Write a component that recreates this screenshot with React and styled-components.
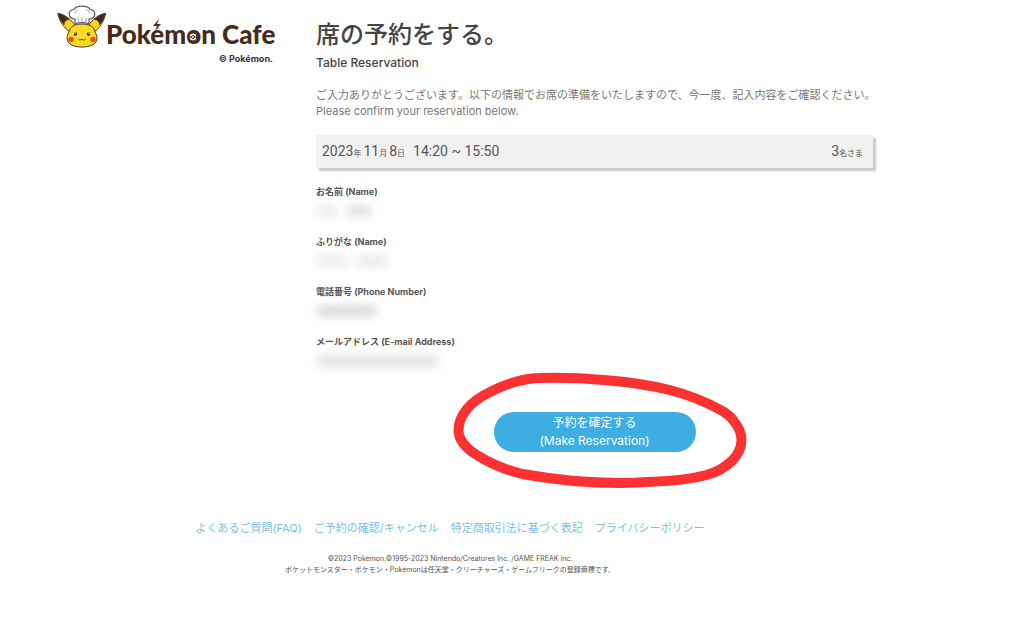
import React from "react";
import styled, { createGlobalStyle } from "styled-components";

const GlobalStyle = createGlobalStyle`
  * { box-sizing: border-box; }
  body {
    margin: 0;
    background: #fff;
    color: #555;
    font-family: Inter, "Noto Sans CJK JP", sans-serif;
  }
  h1, h2, p, dl, dt, dd, ul { margin: 0; padding: 0; }
`;

const Page = styled.div`
  padding: 0 151px 64px 27px;
`;

const Columns = styled.div`
  display: flex;
  gap: 43px;
`;

const Brand = styled.header`
  flex: none;
  width: 246px;
  padding: 5px 0 0 30px;
  display: flex;
  flex-direction: column;
`;

const LogoLink = styled.a`
  display: flex;
  align-items: flex-start;
  color: #452a1d;
  text-decoration: none;
`;

const Mascot = styled.svg`
  flex: none;
  width: 49px;
  height: 44px;
`;

const Wordmark = styled.span`
  position: relative;
  padding-top: 13px;
  font: 900 26px/32px Lato, sans-serif;
  white-space: nowrap;
`;

const WordmarkDetails = styled.svg`
  position: absolute;
  left: 0;
  top: 0;
  width: 100%;
  height: 44px;
`;

const Rights = styled.small`
  align-self: flex-end;
  margin-top: 3px;
  font-size: 9px;
  line-height: 12px;
  font-weight: 700;
  color: #333;
`;

const Main = styled.main`
  flex: 1;
  min-width: 0;
  padding-top: 17px;
`;

const Title = styled.h1`
  font-size: 24px;
  line-height: 36px;
  font-weight: 500;
  color: #444;
`;

const Subtitle = styled.h2`
  margin-top: 2px;
  font-size: 12px;
  line-height: 16px;
  font-weight: 500;
  color: #444;
`;

const Intro = styled.p`
  margin-top: 16px;
  font-size: 11px;
  line-height: 16px;
  color: #777;
  white-space: nowrap;
`;

const Summary = styled.section`
  display: flex;
  justify-content: space-between;
  margin-top: 16px;
  padding: 7px 10px 8px 6px;
  font-family: Roboto, "Noto Sans CJK JP", sans-serif;
  line-height: 18px;
  font-size: 14px;
  font-weight: 400;
  color: #555;
  background: #f1f1f1;
  box-shadow: 3px 3px 2px #c8c8c8;
`;

const Unit = styled.small`
  font-size: 8px;
  line-height: 8px;
  font-weight: 400;
  margin-right: ${(p) => p.$gap || 0}px;
`;

const Details = styled.dl`
  padding-top: 17px;
`;

const Field = styled.div`
  height: 50px;
`;

const Label = styled.dt`
  font-size: 9px;
  line-height: 14px;
  font-weight: 700;
  color: #555;
`;

const Value = styled.dd`
  display: flex;
  gap: 8px;
  padding-top: 6px;
`;

const Masked = styled.span`
  width: ${(p) => p.$width}px;
  height: 12px;
  background: ${(p) => p.$tone};
  border-radius: 6px;
  filter: blur(4px);
`;

const Submit = styled.div`
  position: relative;
  display: flex;
  justify-content: center;
  padding-top: 27px;
`;

const SubmitButton = styled.button`
  width: 202px;
  padding: 2px 0;
  border: 0;
  border-radius: 20px;
  background: #3dade2;
  color: #fff;
  font-family: inherit;
  font-size: 12px;
  line-height: 18px;
  cursor: pointer;
`;

const Marker = styled.svg`
  position: absolute;
  left: 50%;
  top: -15px;
  width: 300px;
  height: 124px;
  margin-left: -145px;
  pointer-events: none;
`;

const Footer = styled.footer`
  padding-top: 68px;
  text-align: center;
`;

const Links = styled.ul`
  display: flex;
  justify-content: center;
  gap: 12px;
  list-style: none;
  font-size: 11px;
  line-height: 16px;
  white-space: nowrap;

  a { color: #7cbfe3; text-decoration: none; }
`;

const Legal = styled.div`
  padding-top: 17px;
  font-size: 7px;
  line-height: 11px;
  color: #555;
`;

const fields = [
  { label: "お名前 (Name)", blocks: [[22, "#ececec"], [26, "#e2e2e2"]] },
  { label: "ふりがな (Name)", blocks: [[32, "#ececec"], [32, "#eaeaea"]] },
  { label: "電話番号 (Phone Number)", blocks: [[61, "#dcdcdc"]] },
  { label: "メールアドレス (E-mail Address)", blocks: [[124, "#e4e4e4"]] },
];

const links = ["よくあるご質問(FAQ)", "ご予約の確認/キャンセル", "特定商取引法に基づく表記", "プライバシーポリシー"];

function Logo() {
  return (
    <LogoLink href="#">
      <Mascot viewBox="0 0 49 44" aria-hidden="true">
        <g stroke="#513922" strokeWidth="1" strokeLinejoin="round">
          <path d="M13 27C7 23 2 16 1 8.500c7 1 13 6 18 12.500Z" fill="#f7d51d" />
          <path d="M37 27c6-4 10-11 11.500-18.500C41 9.500 35 15 31 21Z" fill="#f7d51d" />
          <path d="M1 8.500c4 .5 8 3 11 6-3 0-5 2-5 5-3-3-5-7-6-11ZM48.500 8.500c-4 .5-8 3-11 6 3 0 5 2 5 5 3-3 5-7 6-11Z" fill="#3c2b22" />
          <path d="M25 19c-8 0-12 3-13 8-1 2-2 4-2 6 0 6 6 9 15 9s15-3 15-9c0-2-1-4-2-6-1-5-5-8-13-8Z" fill="#fbda22" />
        </g>
        <path d="M18 19v-5C11 14 10 5 17 4.500 19 0 31 0 33 4.500c7 .5 6 9.500-1 9.500v5c-4-1.500-10-1.500-14 0Z" fill="#fff" stroke="#50596a" strokeWidth="1.200" />
        <path d="m21.500 17.500-.5-5M25 17.500v-5M28.500 17.500l.5-5M18 8c0-2 1-3 3-3m11 3c0-2-1-3-3-3" fill="none" stroke="#8992a0" strokeWidth=".8" />
        <circle cx="18.500" cy="29" r="1.700" fill="#302821" />
        <circle cx="31.500" cy="29" r="1.700" fill="#302821" />
        <circle cx="18.200" cy="28.400" r=".6" fill="#fff" />
        <circle cx="31.800" cy="28.400" r=".6" fill="#fff" />
        <circle cx="14" cy="34.500" r="2.700" fill="#ee4b26" />
        <circle cx="36" cy="34.500" r="2.700" fill="#ee4b26" />
        <path d="M21.500 34c1 1.200 3 1.200 3.500 0 .5 1.200 2.500 1.200 3.500 0" fill="none" stroke="#49301c" strokeWidth="1" />
      </Mascot>
      <Wordmark>
        Pokémon Cafe
        <WordmarkDetails aria-hidden="true">
          <path d="M46 11h12v12H46Z" fill="#fff" />
          <path d="m53 14-6 7h4l-2 5 6-7h-4l2-5Z" fill="#452a1d" />
          <circle cx="87" cy="32" r="4" fill="#fff" stroke="#452a1d" />
          <path d="M83 32h8" stroke="#452a1d" />
          <circle cx="87" cy="32" r="1.500" fill="#fff" stroke="#452a1d" />
        </WordmarkDetails>
      </Wordmark>
    </LogoLink>
  );
}

export default function App() {
  return (
    <>
      <GlobalStyle />
      <Page lang="ja">
        <Columns>
          <Brand>
            <Logo />
            <Rights>© Pokémon.</Rights>
          </Brand>
          <Main>
            <Title>席の予約をする。</Title>
            <Subtitle>Table Reservation</Subtitle>
            <Intro>
              ご入力ありがとうございます。以下の情報でお席の準備をいたしますので、今一度、記入内容をご確認ください。
              <br />
              Please confirm your reservation below.
            </Intro>
            <Summary>
              <span>
                2023<Unit $gap={2}>年</Unit>11<Unit $gap={2}>月</Unit>8<Unit $gap={8}>日</Unit>14:20 ~ 15:50
              </span>
              <span>3<Unit>名さま</Unit></span>
            </Summary>
            <Details>
              {fields.map((field) => (
                <Field key={field.label}>
                  <Label>{field.label}</Label>
                  <Value>
                    {field.blocks.map(([width, tone], i) => (
                      <Masked key={i} $width={width} $tone={tone} />
                    ))}
                  </Value>
                </Field>
              ))}
            </Details>
            <Submit>
              <SubmitButton type="button">
                予約を確定する
                <br />
                (Make Reservation)
              </SubmitButton>
              <Marker viewBox="0 0 300 124" aria-hidden="true">
                <path
                  d="M90 8C75 8 55 14 40 22 21 31 8.500 45 8.500 60c0 11 8 19 20 26 13 8 27 14 44 18 28 5 67 9 97 9 35-1 65-2 87-8 21-6 35-20 35-35 0-8-3-13-7-18-4-6-7-8-12-11-18-10-33-16-53-21C185 11 130 7 90 8Z"
                  fill="none" stroke="#fc3232" strokeWidth="10" strokeLinejoin="round"
                />
              </Marker>
            </Submit>
          </Main>
        </Columns>
        <Footer>
          <nav>
            <Links>
              {links.map((text) => (
                <li key={text}><a href="#">{text}</a></li>
              ))}
            </Links>
          </nav>
          <Legal>
            <p>©2023 Pokémon.©1995-2023 Nintendo/Creatures Inc. /GAME FREAK inc.</p>
            <p>ポケットモンスター・ポケモン・Pokémonは任天堂・クリーチャーズ・ゲームフリークの登録商標です。</p>
          </Legal>
        </Footer>
      </Page>
    </>
  );
}
